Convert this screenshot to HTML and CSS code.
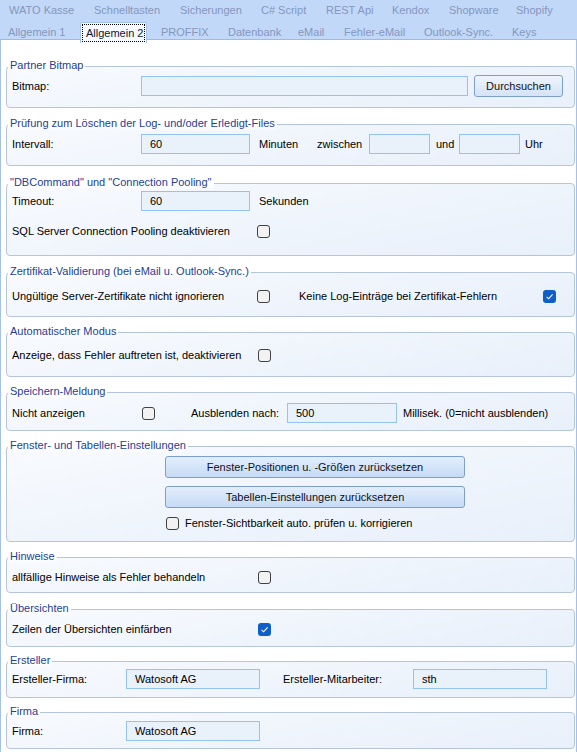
FILE: index.html
```html
<!DOCTYPE html>
<html lang="de">
<head>
<meta charset="utf-8">
<title>Allgemein 2</title>
<link rel="stylesheet" href="styles.css">
</head>
<body>
<div class="tabs">
  <div class="tabrow r1">
    <span class="tab">WATO Kasse</span>
    <span class="tab">Schnelltasten</span>
    <span class="tab">Sicherungen</span>
    <span class="tab">C# Script</span>
    <span class="tab">REST Api</span>
    <span class="tab">Kendox</span>
    <span class="tab">Shopware</span>
    <span class="tab">Shopify</span>
  </div>
  <div class="tabrow r2">
    <span class="tab">Allgemein 1</span>
    <span class="tab"><span class="sel"><span class="focus">Allgemein 2</span></span></span>
    <span class="tab">PROFFIX</span>
    <span class="tab">Datenbank</span>
    <span class="tab">eMail</span>
    <span class="tab">Fehler-eMail</span>
    <span class="tab">Outlook-Sync.</span>
    <span class="tab">Keys</span>
  </div>
</div>

<div class="page">
  <fieldset class="grp g1">
    <legend>Partner Bitmap</legend>
    <div class="row">
      <span class="lbl l129">Bitmap:</span>
      <span class="inp w327"></span>
      <span class="btn bsearch">Durchsuchen</span>
    </div>
  </fieldset>

  <fieldset class="grp g2">
    <legend>Prüfung zum Löschen der Log- und/oder Erledigt-Files</legend>
    <div class="row">
      <span class="lbl l129">Intervall:</span>
      <span class="inp w109">60</span>
      <span class="lbl l-min">Minuten</span>
      <span class="lbl l-zw">zwischen</span>
      <span class="inp w61"></span>
      <span class="lbl l-und">und</span>
      <span class="inp w61"></span>
      <span class="lbl l-uhr">Uhr</span>
    </div>
  </fieldset>

  <fieldset class="grp g3">
    <legend>"DBCommand" und "Connection Pooling"</legend>
    <div class="row">
      <span class="lbl l129">Timeout:</span>
      <span class="inp w109">60</span>
      <span class="lbl l-min">Sekunden</span>
    </div>
    <div class="row r-gap8">
      <span class="lbl l245">SQL Server Connection Pooling deaktivieren</span>
      <span class="cb"></span>
    </div>
  </fieldset>

  <fieldset class="grp g4">
    <legend>Zertifikat-Validierung (bei eMail u. Outlook-Sync.)</legend>
    <div class="row">
      <span class="lbl l245">Ungültige Server-Zertifikate nicht ignorieren</span>
      <span class="cb"></span>
      <span class="lbl l-keine">Keine Log-Einträge bei Zertifikat-Fehlern</span>
      <span class="cb on"><svg viewBox="0 0 13 13" width="13" height="13"><path d="M3.6 6.9 L5.6 8.8 L9.6 4.4" fill="none" stroke="#fff" stroke-width="1.1"/></svg></span>
    </div>
  </fieldset>

  <fieldset class="grp g5">
    <legend>Automatischer Modus</legend>
    <div class="row">
      <span class="lbl l246">Anzeige, dass Fehler auftreten ist, deaktivieren</span>
      <span class="cb"></span>
    </div>
  </fieldset>

  <fieldset class="grp g6">
    <legend>Speichern-Meldung</legend>
    <div class="row">
      <span class="lbl l130">Nicht anzeigen</span>
      <span class="cb"></span>
      <span class="lbl l-aus">Ausblenden nach:</span>
      <span class="inp w110">500</span>
      <span class="lbl l-ms">Millisek. (0=nicht ausblenden)</span>
    </div>
  </fieldset>

  <fieldset class="grp g7">
    <legend>Fenster- und Tabellen-Einstellungen</legend>
    <div class="btncol">
      <span class="btn bwide">Fenster-Positionen u. -Größen zurücksetzen</span>
      <span class="btn bwide">Tabellen-Einstellungen zurücksetzen</span>
      <div class="cbrow">
        <span class="cb"></span>
        <span class="lbl">Fenster-Sichtbarkeit auto. prüfen u. korrigieren</span>
      </div>
    </div>
  </fieldset>

  <fieldset class="grp g8">
    <legend>Hinweise</legend>
    <div class="row">
      <span class="lbl l246">allfällige Hinweise als Fehler behandeln</span>
      <span class="cb"></span>
    </div>
  </fieldset>

  <fieldset class="grp g9">
    <legend>Übersichten</legend>
    <div class="row">
      <span class="lbl l246">Zeilen der Übersichten einfärben</span>
      <span class="cb on"><svg viewBox="0 0 13 13" width="13" height="13"><path d="M3.6 6.9 L5.6 8.8 L9.6 4.4" fill="none" stroke="#fff" stroke-width="1.1"/></svg></span>
    </div>
  </fieldset>

  <fieldset class="grp g10">
    <legend>Ersteller</legend>
    <div class="row">
      <span class="lbl l114">Ersteller-Firma:</span>
      <span class="inp w134">Watosoft AG</span>
      <span class="lbl l-mit">Ersteller-Mitarbeiter:</span>
      <span class="inp w134">sth</span>
    </div>
  </fieldset>

  <fieldset class="grp g11">
    <legend>Firma</legend>
    <div class="row">
      <span class="lbl l114">Firma:</span>
      <span class="inp w134">Watosoft AG</span>
    </div>
  </fieldset>
</div>
</body>
</html>
```

FILE: styles.css
```css
* { box-sizing: border-box; }
html, body { margin: 0; padding: 0; background: #ffffff; }
body {
  font-family: "Liberation Sans", Arial, sans-serif;
  font-size: 11px;
  color: #000;
  width: 577px;
  overflow: hidden;
}

/* ---------- tab strip ---------- */
.tabs {
  height: 40px;
  background: #c1d8f9;
  border-bottom: 1px solid #98bbec;
}
.tabrow {
  display: grid;
  height: 20px;
  align-items: center;
}
.r1 {
  padding-left: 9px;
  grid-template-columns: 85px 86px 81px 65px 66px 57px 67px 1fr;
}
.r2 {
  padding-left: 8px;
  grid-template-columns: 77px 76px 67px 70px 46px 80px 88px 1fr;
  height: 20px;
}
.tab {
  color: #8696bd;
  white-space: nowrap;
  line-height: 14px;
}
.r2 .tab { position: relative; top: 1px; }
.sel {
  position: relative;
  display: block;
  margin-left: -5px;
  width: 67px;
  height: 21px;
  margin-top: 1px;
  background: #f6f9fe;
  border: 1px solid #a6c3ea;
  border-bottom: none;
  border-radius: 2px 2px 0 0;
  padding: 1px 1px 0 1px;
}
.focus {
  display: block;
  height: 18px;
  border: 1px dotted #000;
  color: #101830;
  line-height: 16px;
  padding-left: 3px;
}

/* ---------- page ---------- */
.page {
  border-left: 1px solid #a3c1ea;
  border-right: 1px solid #a3c1ea;
  min-height: 712px;
  padding-top: 19px;
}
.grp {
  margin: 0 1px 0 5px;
  min-width: 0;
  border: 1px solid #b5c5da;
  border-radius: 4px;
  padding: 0 5px;
  background: linear-gradient(170deg, #f8fafe 0%, #eef4fc 60%, #e8f0fa 100%);
}
.grp legend {
  margin-left: -4px;
  padding: 0 2px 2px 2px;
  line-height: 12px;
  color: #23409a;
  background: linear-gradient(#ffffff 60%, rgba(255,255,255,0));
}
.g1 { padding-top: 2px; padding-bottom: 10px; }
.g2 { margin-top: 9px; padding-top: 2px; padding-bottom: 10px; }
.g3 { margin-top: 10px; padding-top: 0; padding-bottom: 13px; }
.g4 { margin-top: 9px; padding-top: 6px; padding-bottom: 9px; }
.g5 { margin-top: 8px; padding-top: 5px; padding-bottom: 10px; }
.g6 { margin-top: 8px; padding-top: 3px; padding-bottom: 6px; }
.g7 { margin-top: 8px; padding-top: 3px; padding-bottom: 9px; }
.g8 { margin-top: 8px; padding-top: 2px; padding-bottom: 4px; }
.g9 { margin-top: 9px; padding-top: 2px; padding-bottom: 6px; }
.g10 { margin-top: 7px; padding-top: 0; padding-bottom: 7px; }
.g11 { margin-top: 7px; padding-top: 1px; padding-bottom: 6px; }

.row {
  display: flex;
  align-items: center;
  height: 22px;
}
.r-gap8 { margin-top: 8px; }

.lbl { white-space: nowrap; flex: none; }
.l114 { width: 114px; }
.l129 { width: 129px; }
.l130 { width: 130px; }
.l245 { width: 245px; }
.l246 { width: 246px; }
.l-min { margin-left: 9px; width: 58px; }
.l-zw { width: 52px; }
.l-und { margin-left: 6px; width: 23px; }
.l-uhr { margin-left: 5px; }
.l-keine { margin-left: 29px; width: 244px; }
.l-aus { margin-left: 36px; width: 96px; }
.l-ms { margin-left: 6px; }
.l-mit { margin-left: 23px; width: 130px; }

/* ---------- inputs ---------- */
.inp {
  flex: none;
  display: block;
  height: 20px;
  background: #e9f1fb;
  border: 1px solid #92c3f2;
  padding-left: 8px;
  line-height: 18px;
  color: #000;
}
.w61 { width: 61px; }
.w109 { width: 109px; }
.w110 { width: 110px; }
.w134 { width: 134px; }
.w327 { width: 327px; }

/* ---------- buttons ---------- */
.btn {
  flex: none;
  display: flex;
  align-items: center;
  justify-content: center;
  height: 22px;
  border: 1px solid #7e9fcb;
  border-radius: 3px;
  color: #101018;
  white-space: nowrap;
}
.bsearch {
  margin-left: 6px;
  width: 89px;
  background: linear-gradient(#eef4fd, #d5e3f5);
}
.btncol {
  display: flex;
  flex-direction: column;
  align-items: flex-start;
  padding-left: 153px;
}
.bwide {
  width: 300px;
  background: linear-gradient(#e2eefc, #c6dbf6);
}
.bwide + .bwide { margin-top: 8px; }
.cbrow {
  display: flex;
  align-items: center;
  gap: 6px;
  height: 18px;
  margin-top: 6px;
  padding-left: 1px;
}

/* ---------- checkboxes ---------- */
.cb {
  flex: none;
  display: block;
  width: 13px;
  height: 13px;
  border: 1px solid #404040;
  border-radius: 3px;
  background: #f2f2f2;
}
.cb.on {
  border: none;
  background: #0f5fc8;
}
.cb svg { display: block; }
```
